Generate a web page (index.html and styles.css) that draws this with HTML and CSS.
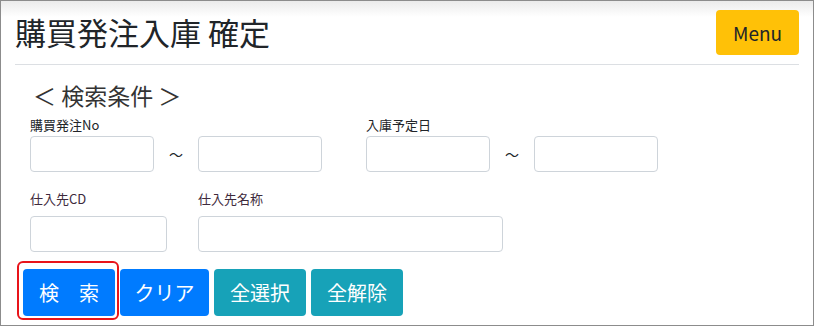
FILE: index.html
```html
<!DOCTYPE html>
<html lang="ja">
<head>
    <meta charset="UTF-8">
    <meta name="viewport" content="width=device-width, initial-scale=1.0">
    <title>購買発注入庫 確定</title>
    <link rel="stylesheet" href="styles.css">
</head>
<body>
    <div class="frame">
        <div class="header">
            <h1 class="page-title">購買発注入庫 確定</h1>
            <button class="btn btn-menu">Menu</button>
        </div>
        <hr class="divider">
        <div class="search">
            <h2 class="search-title">＜ 検索条件 ＞</h2>
            <div class="form-row">
                <div class="field">
                    <label>購買発注No</label>
                    <div class="range">
                        <input type="text" class="input-sm">
                        <span class="tilde">～</span>
                        <input type="text" class="input-sm">
                    </div>
                </div>
                <div class="field">
                    <label>入庫予定日</label>
                    <div class="range">
                        <input type="text" class="input-sm">
                        <span class="tilde">～</span>
                        <input type="text" class="input-sm">
                    </div>
                </div>
            </div>
            <div class="form-row row-2">
                <div class="field">
                    <label class="label-alt">仕入先CD</label>
                    <input type="text" class="input-cd">
                </div>
                <div class="field">
                    <label class="label-alt">仕入先名称</label>
                    <input type="text" class="input-name">
                </div>
            </div>
            <div class="buttons">
                <button class="btn btn-primary btn-search">検　索<span class="highlight"></span></button>
                <button class="btn btn-primary btn-clear">クリア</button>
                <button class="btn btn-info">全選択</button>
                <button class="btn btn-info">全解除</button>
            </div>
        </div>
    </div>
</body>
</html>
```

FILE: styles.css
```css
body {
    margin: 0;
    font-family: "Noto Sans CJK JP", "Noto Sans", sans-serif;
    color: #212529;
}
.frame {
    height: 326px;
    box-sizing: border-box;
    border: 1px solid #8c8c8c;
    padding: 0 14px;
    background: linear-gradient(#ebebeb, #ffffff 16px);
    overflow: hidden;
}
.header {
    display: flex;
    justify-content: space-between;
    align-items: flex-start;
    padding-top: 9px;
}
.page-title {
    margin: 0;
    font-size: 31px;
    font-weight: 400;
    line-height: 44px;
}
.btn {
    border: none;
    border-radius: 4px;
    font-family: inherit;
    white-space: nowrap;
    cursor: pointer;
}
.btn-menu {
    width: 83px;
    height: 45px;
    background-color: #ffc107;
    color: #212529;
    font-size: 19px;
}
.divider {
    margin: 9px 0 0;
    border: none;
    border-top: 1px solid #dcdfe3;
}
.search-title {
    margin: 14px 0 0 18px;
    font-size: 23px;
    font-weight: 400;
    line-height: 32px;
    color: #333;
}
.form-row {
    display: flex;
    gap: 44px;
    padding-left: 15px;
    margin-top: 4px;
}
.row-2 {
    gap: 31px;
    margin-top: 17px;
}
.field {
    display: flex;
    flex-direction: column;
}
.field label {
    font-size: 13px;
    line-height: 19px;
    margin-bottom: 2px;
}
.label-alt {
    color: #3e2a3c;
}
.row-2 .field label {
    margin-bottom: 8px;
}
.range {
    display: flex;
    align-items: center;
}
.tilde {
    width: 44px;
    text-align: center;
    font-size: 14px;
}
input {
    height: 36px;
    box-sizing: border-box;
    border: 1px solid #ced4da;
    border-radius: 4px;
    padding: 4px 8px;
    font-family: inherit;
}
.input-sm {
    width: 124px;
}
.input-cd {
    width: 137px;
}
.input-name {
    width: 305px;
}
.buttons {
    display: flex;
    gap: 5px;
    padding-left: 8px;
    margin-top: 17px;
}
.buttons .btn {
    height: 47px;
    width: 92px;
    padding: 0;
    font-size: 20px;
    color: #fff;
}
.btn-primary {
    background-color: #007bff;
}
.btn-info {
    background-color: #17a2b8;
}
.buttons .btn-clear {
    width: 89px;
}
.btn-search {
    position: relative;
}
.highlight {
    position: absolute;
    left: -6px;
    top: -8px;
    right: -4px;
    bottom: -4px;
    border: 2px solid #e8141a;
    border-radius: 6px;
}
```
